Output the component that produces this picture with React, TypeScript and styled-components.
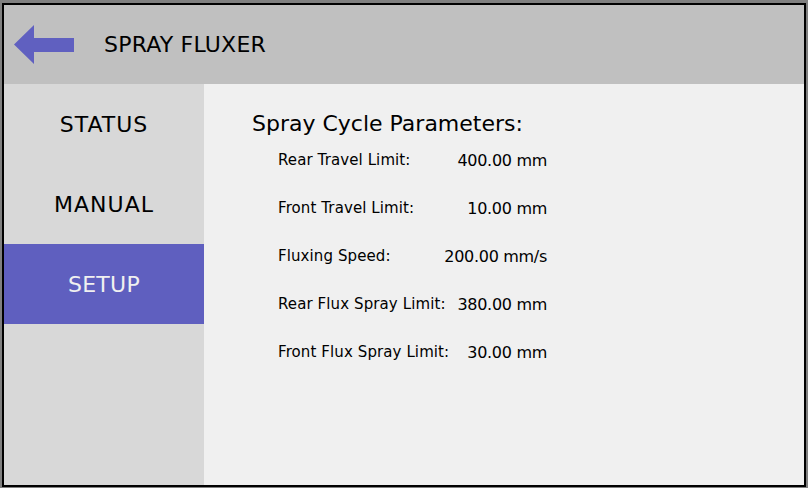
import React from "react";
import styled, { createGlobalStyle } from "styled-components";

const Global = createGlobalStyle`
  html, body { margin: 0; padding: 0; background: #808080; }
  body { width: 808px; height: 488px; overflow: hidden; }
`;

const Frame = styled.div`
  box-sizing: border-box;
  margin: 3px 0 0 2px;
  width: 804px;
  height: 484px;
  border: 2px solid #000;
  display: flex;
  flex-direction: column;
  font-family: "DejaVu Sans", sans-serif;
  color: #000;
`;

const Header = styled.header`
  height: 79px;
  background: #c0c0c0;
  display: flex;
  align-items: center;
  flex-shrink: 0;
`;

const BackButton = styled.button`
  border: 0;
  background: transparent;
  padding: 0;
  margin: 0 30px 0 10px;
  width: 60px;
  height: 40px;
  display: flex;
  cursor: pointer;
`;

const Title = styled.h1`
  margin: 0;
  font-size: 22px;
  font-weight: normal;
  letter-spacing: 0.2px;
`;

const Body = styled.div`
  flex: 1;
  display: flex;
`;

const Sidebar = styled.nav`
  width: 200px;
  background: #d8d8d8;
  display: flex;
  flex-direction: column;
`;

const NavItem = styled.div<{ $active?: boolean }>`
  height: 80px;
  display: flex;
  align-items: center;
  justify-content: center;
  font-size: 22px;
  letter-spacing: ${(p) => (p.$active ? "0.3px" : "1px")};
  background: ${(p) => (p.$active ? "#5f5fbf" : "transparent")};
  color: ${(p) => (p.$active ? "#f0f0f0" : "#000")};
`;

const Content = styled.main`
  flex: 1;
  background: #f0f0f0;
  padding: 25px 0 0 48px;
`;

const SectionTitle = styled.h2`
  margin: 0;
  font-size: 22px;
  font-weight: normal;
  line-height: 30px;
`;

const ParamList = styled.div`
  margin: -3px 0 0 26px;
  width: 269px;
  display: flex;
  flex-direction: column;
`;

const Row = styled.div`
  height: 48px;
  display: flex;
  align-items: center;
  justify-content: space-between;
  white-space: nowrap;
`;

const Label = styled.span`
  font-size: 15px;
  letter-spacing: 0.1px;
`;

const Value = styled.span`
  font-size: 16px;
  letter-spacing: -0.3px;
`;

const params = [
  ["Rear Travel Limit:", "400.00 mm"],
  ["Front Travel Limit:", "10.00 mm"],
  ["Fluxing Speed:", "200.00 mm/s"],
  ["Rear Flux Spray Limit:", "380.00 mm"],
  ["Front Flux Spray Limit:", "30.00 mm"],
];

export default function App() {
  return (
    <>
      <Global />
      <Frame>
        <Header>
          <BackButton aria-label="Back">
            <svg width="60" height="40" viewBox="0 0 60 40">
              <polygon points="0,19.5 20,0 20,13 60,13 60,27 20,27 20,39" fill="#6060c0" />
            </svg>
          </BackButton>
          <Title>SPRAY FLUXER</Title>
        </Header>
        <Body>
          <Sidebar>
            <NavItem>STATUS</NavItem>
            <NavItem>MANUAL</NavItem>
            <NavItem $active>SETUP</NavItem>
          </Sidebar>
          <Content>
            <SectionTitle>Spray Cycle Parameters:</SectionTitle>
            <ParamList>
              {params.map(([l, v]) => (
                <Row key={l}>
                  <Label>{l}</Label>
                  <Value>{v}</Value>
                </Row>
              ))}
            </ParamList>
          </Content>
        </Body>
      </Frame>
    </>
  );
}
